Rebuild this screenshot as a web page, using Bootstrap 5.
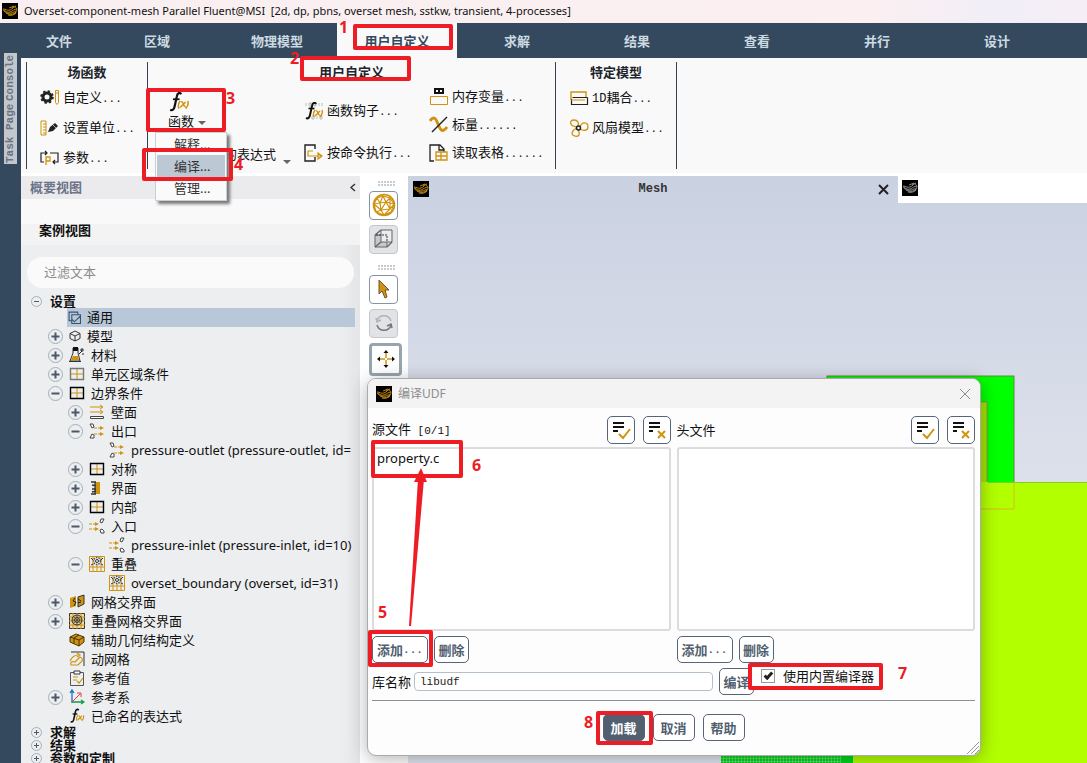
<!DOCTYPE html>
<html lang="zh-CN">
<head>
<meta charset="utf-8">
<meta name="viewport" content="width=device-width, initial-scale=1">
<title>Overset-component-mesh Parallel Fluent@MSI</title>
<link rel="stylesheet" href="https://cdn.jsdelivr.net/npm/bootstrap@5.3.0/dist/css/bootstrap.min.css">
<style>
:root{--navy:#34495e;--gold:#cf930f;--slate:#525f70;--note:#ee1c25}
body{font-family:"Noto Sans","Noto Sans CJK SC",sans-serif;font-size:13px;line-height:18px;color:#111;background:#fff;height:100vh;overflow:hidden}
button{font:inherit;color:inherit}
svg{display:block;flex:none}
.mono{font-family:"Liberation Mono","Noto Sans CJK SC",monospace;font-size:11px}
.plain{border:0;background:none;padding:0}
.title-strip{height:23px;padding-left:2px;gap:6px;font-size:11px;background:linear-gradient(90deg,#f9eff0 0,#fbeff1 80%,#f1eef7 92%,#f6eef6);white-space:nowrap}
.rail{width:21px;background:var(--navy);padding:30px 4px 0}
.rail button{display:block;writing-mode:vertical-rl;transform:rotate(180deg);background:#c2c7cc;color:#687386;font:bold 11px/13px "Liberation Mono",monospace;width:13px;text-align:center;white-space:nowrap}
.rail .tab-a{height:49px}.rail .tab-b{height:62px}
.menu-strip{height:35px;background:var(--navy)}
.menu-strip .nav-link{width:120px;height:35px;padding:2px 0 0;line-height:33px;text-align:center;color:#ccdae1;font-weight:700;border-radius:0}
.menu-strip .first-tab{width:76px}
.menu-strip .nav-link.active{background:#f9f9f9;color:var(--navy)}
.ribbon{height:118px;background:#f9f9f9;padding:4px 0 0 5px;border-bottom:3px solid #fff}
.group-box{height:107px;border-left:1px solid #34404e;position:relative}
.group-box h2{font-size:13px;line-height:20px;font-weight:700;text-align:center;margin:0;color:#20242c}
.tool{display:flex;align-items:center;gap:3px;white-space:nowrap;height:20px}
.g-one{width:121px}.g-two{width:408px}.g-three{width:122px;border-right:1px solid #34404e}
.stack-30{display:flex;flex-direction:column;gap:10px;padding:6px 0 0 13px}
.col-fn{width:156px;position:relative}
.col-hook{width:125px;padding-top:19px;gap:22px}
.col-mem{padding-top:5px;gap:8px}
.fn-btn{display:flex;flex-direction:column;align-items:flex-start;width:40px;margin:10px 0 0 20px;line-height:18px}
.expr-btn{margin:14px 13px 0 auto}
.caret{width:0;height:0;border:4px solid transparent;border-top:4px solid #666;border-bottom:0}
.drop{position:absolute;left:7px;top:50px;width:72px;height:69px;min-width:0;padding:0 1px;border:1px solid #c8cfd6;border-radius:0;background:#fafafa;box-shadow:3px 3px 3px #777;z-index:5;font-size:13px;display:block}
.drop .dropdown-item{padding:0 0 0 17px;height:22px;line-height:20px;color:#333}
.drop .dropdown-item.picked{background:#bcc8d3}
.outline{width:339px;background:linear-gradient(90deg,transparent 320px,rgba(0,0,0,.04)),#eceef0;overflow:hidden}
.panel-head{height:23px;background:#ebebed;color:#6b7488;font-weight:700;padding:0 4px 0 9px}
.panel-gap{height:25px;background:#f9f9f9}
.case-head{height:21px;background:#f3f3f3;padding-left:18px;font-weight:700;font-size:13px;line-height:12px;margin:0}
.filter{height:31px;border-radius:16px;border:0;background:#fafafa;margin:12px 6px 7px;width:auto;padding:0 17px;font-size:13px;align-self:stretch;box-shadow:none}
.filter::placeholder{color:#8b8b8b}
.tree{margin:0 5px 0 0;padding:0;list-style:none;overflow:hidden}
.tree li{height:19px;display:flex;align-items:center;white-space:nowrap;padding-left:27px;gap:6px}
.tree li.lv2{padding-left:47px}.tree li.lv3{padding-left:88px}.tree li.leaf{padding-left:48px}
.tree li.lv0{height:13px;line-height:13px;padding-left:10px;gap:8px;font-weight:700}
.tree li.chosen{margin-left:46px;padding-left:1px;background:#b9c8d9}
.knob{width:15px;height:15px;border:1px solid #a3b0ba;border-radius:50%;position:relative;background:none;padding:0;flex:none}
.knob::before,.knob.more::after{content:"";position:absolute;background:#4d5868;left:3px;right:3px;top:6px;height:1px;box-shadow:0 0 0 .5px #4d5868}
.knob.more::after{left:6px;right:auto;width:1px;top:3px;height:7px}
.lv0 .knob{width:11px;height:11px}
.lv0 .knob::before,.lv0 .knob.more::after{top:4px;left:2px;right:2px;box-shadow:none}
.lv0 .knob.more::after{left:4px;right:auto;top:2px;height:5px}
.tools{width:48px;background:#fff;padding:5px 0 0 9px}
.grip{width:17px;height:5px;margin:0 0 5px 9px;background:radial-gradient(circle at 1px 1px,#ccc 1px,transparent 1px) 0 0/3px 3px}
.grip.lower{margin-top:11px}
.pad-btn{width:29px;height:29px;border:1px solid #8495a3;border-radius:4px;background:#fff;display:flex;align-items:center;justify-content:center;padding:0;margin-bottom:5px}
.pad-btn.dim{background:#e2e3e7;border-color:#c4c8cc}
.pad-btn.on{width:33px;height:33px;border:3px solid #97a5b0}
.view{background:linear-gradient(#cad1e1,#dfe3ed 60%,#e2e6ef);position:relative;min-width:0;overflow:hidden}
.scene{position:absolute;inset:0;width:100%;height:100%}
.view-tabs{position:relative;height:27px}
.view-tab{width:490px;padding:0 8px 0 5px;font-weight:700;color:#333}
.mono.big{font-size:12px}
.dialog-win{position:absolute;left:367px;top:378px;width:614px;background:#fdfdfd;border:1px solid #aaa;border-radius:9px;box-shadow:0 3px 18px rgba(0,0,0,.3);z-index:10}
.dialog-head{height:29px;background:#f3f3f3;border-radius:8px 8px 0 0;padding:0 9px 0 8px;gap:6px;color:#8d8d8d;font-size:12px}
.dialog-body{padding:8px 5px 14px 4px}
.side{flex:1 1 0}
.pair{display:flex;gap:6px}
.box-btn{border:1px solid #56657a;border-radius:5px;background:#fff;color:var(--slate);height:27px;font-weight:700;padding:0;width:35px;white-space:nowrap;display:flex;align-items:center;justify-content:center;flex:none}
.box-btn.w55{width:56px}.box-btn.w42{width:42px}
.box-btn.sq{width:28px;height:28px}
.box-btn.solid{background:#525f6e;color:#fff}
.file-list{height:184px;margin:3px 0 5px;border:2px solid #dcdcdc;border-radius:3px;background:#fff;padding:0 3px}
.file-list div{line-height:18px;font-size:13px}
.lib-row{padding-top:5px}
.lib-input{height:19px;width:299px;margin:0 6px 4px 3px;border:1px solid #b3c0cc;border-radius:4px;padding:0 5px;background:#fff;color:#222;line-height:17px}
.builtin{height:22px;margin-top:-3px;background:#fdfdfd;z-index:1;margin-left:-5px;padding-left:12px}
.builtin input{appearance:none;width:14px;height:14px;border:1px solid #999;margin:0;background:#fff;display:grid;place-content:center}
.builtin input:checked::before{content:"";width:9px;height:5px;border:solid #222;border-width:0 0 3px 3px;transform:rotate(-48deg) translate(1px,-1px)}
.footer-row{border-top:1px solid #8e9296;padding-top:13px;margin-top:5px;gap:8px}
.note{position:absolute;border:4px solid var(--note);border-radius:2px;pointer-events:none;z-index:20}
.num{position:absolute;color:var(--note);font-weight:700;font-size:16px;line-height:16px;z-index:20;pointer-events:none}
</style>
</head>
<body class="d-flex flex-column position-relative">
<svg width="0" height="0" class="position-absolute" fill="none" aria-hidden="true">
<defs>
<symbol id="logo" viewBox="0 0 16 16"><path fill="#000" d="M0 0h16v16H0z"/><path d="M1 6c3 0 4 2 7 1s4-4 6-4M1 7c3 1 4 3 7 2s4-3 7-3M2 8c3 3 7 3 12 0M4 10c3 2 7 2 10-1M6 12c3 1 6 0 8-2M7 5l5-2M10 5c2-2 4-1 5 1 0 2-1 4-3 5" stroke="currentColor" stroke-width=".9" fill="none"/></symbol>
<symbol id="fx" viewBox="0 0 20 18"><path d="M12 2C11 0 8.500.5 8 4L6 13c-.6 3-2 4-4 3" stroke="#111" stroke-width="2" fill="none"/><path d="M4.500 6.500h6" stroke="#111" stroke-width="1.600"/><path d="M11 8c-2 3-2 5-1 7M18 8c1 3 0 5-2 7M12 9c2-1 2 5 4 4M16 9l-5 5" stroke="#cf930f" stroke-width="1.400" fill="none"/></symbol>
<symbol id="fxb" viewBox="0 0 20 18"><path d="M2 1v3M5 1h2v3H5zM10 1h2v3h-2zM15 1v3M18 1v3M5 14v3M8 14h2v3H8zM13 14v3M16 14h2v3h-2z" stroke="#bbb" fill="none"/><use href="#fx"/></symbol>
<symbol id="gear" viewBox="0 0 20 18"><circle cx="7" cy="8" r="4" fill="none" stroke="#222" stroke-width="3"/><circle cx="7" cy="8" r="5.800" fill="none" stroke="#222" stroke-width="2" stroke-dasharray="2.300 2.250"/><path d="M15.500 1.500h3v12l-1.500 2-1.500-2zM15.500 4h3" stroke="#cf930f" fill="none"/></symbol>
<symbol id="units" viewBox="0 0 20 18"><path d="M1 2h5v14H1zM3 5h3M3 8h3M3 11h3M3 14h3" stroke="#cf930f" fill="none"/><path d="M8 13l2-5 5-4 3 3-5 5z" fill="#222"/><path d="M13 6l3 3" stroke="#aaa"/></symbol>
<symbol id="param" viewBox="0 0 20 18"><path d="M5 4H1v9h3M2 4h5M5 2l2 2-2 2M10 4h8v9h-5M15 11l-2 2 2 2" stroke="#222" stroke-width="1.200" fill="none"/><path d="M6 16V8h4v4H6" stroke="#cf930f" stroke-width="1.300" fill="none"/></symbol>
<symbol id="exec" viewBox="0 0 20 18"><path d="M11 5V1H1v16h10v-4" stroke="#222" stroke-width="1.400" fill="none"/><path d="M9 7H4v5h13M14 9l4 3-4 3z" stroke="#cf930f" stroke-width="1.200" fill="none"/></symbol>
<symbol id="memo" viewBox="0 0 20 18"><path d="M5 0h10v6H5z" fill="#111"/><path d="M7 2h2v2H7zM11 2h2v2h-2z" fill="#fff"/><path d="M1.500 8.500h17v8h-17z" stroke="#cf930f" fill="none"/></symbol>
<symbol id="scalar" viewBox="0 0 20 18"><path d="M1 5C5-1 7 3 9 8s4 10 9 3" stroke="#cf930f" stroke-width="3" fill="none"/><path d="M3 16L18 1" stroke="#222" stroke-width="1.500"/></symbol>
<symbol id="sheet" viewBox="0 0 20 18"><path d="M5 17H1V1h10l4 4v3M10 1v5h5" stroke="#222" stroke-width="1.300" fill="none"/><path d="M7 8h11v8H7zM7 12h11M12 8v8" stroke="#cf930f" stroke-width="1.300" fill="none"/></symbol>
<symbol id="oned" viewBox="0 0 20 18"><path d="M2 11V3h15v5" stroke="#cf930f" stroke-width="1.400" fill="none"/><path d="M18.500 8.500h-15M2.500 10v5.500h16v-7" stroke="#222" stroke-width="1.200" fill="none"/><path d="M2 11h14" stroke="#cf930f"/></symbol>
<symbol id="fan" viewBox="0 0 20 18"><g fill="none" stroke="#cf930f" stroke-width="1.300"><path d="M8 8C0 7 0 1 5 1c4 0 5 3 4 6M11 8c2-6 8-5 8 0 0 4-5 4-8 2M9 11c3 5 0 7-3 6-5-1-3-6 2-8"/></g><circle cx="9.500" cy="9" r="2" fill="none" stroke="#222" stroke-width="1.500"/></symbol>
<symbol id="gen" viewBox="0 0 12 12"><path d="M9 3V1H1v8h2M3.500 3.500h8v8h-8zM4 8l2 2 5-5" stroke="#34536f" fill="none"/></symbol>
<symbol id="cube" viewBox="0 0 12 12"><path d="M6 1l5 2.500v5L6 11 1 8.500v-5zM1 3.500L6 6l5-2.500M6 6v5" stroke="#333" fill="none"/></symbol>
<symbol id="flask" viewBox="0 0 16 16"><path d="M4 1h5v5l2 8H1l3-8z" stroke="#333" fill="none"/><path d="M4 9h5l1 4H2z" fill="#cf930f"/><path d="M4 0h5v4H4z" fill="#111"/><path d="M10 7l3-3M13 1v4M11 3h4M14 6v2" stroke="#222"/><path d="M0 14.500h12" stroke="#333"/></symbol>
<symbol id="grid" viewBox="0 0 16 16"><path d="M8 2v12M2 8h12" stroke="#cf930f"/><path d="M1.500 2.500h13v11h-13z" stroke="currentColor" stroke-width="1.400" fill="none"/></symbol>
<symbol id="wall" viewBox="0 0 16 16"><path d="M1 3h12M1 8h12M11 1l3 2-3 2M11 6l3 2-3 2" stroke="#cf930f" fill="none"/><path d="M1.500 12.500h13v2h-13z" stroke="#444" fill="#fff"/></symbol>
<symbol id="outl" viewBox="0 0 16 16"><path d="M5 5h7M5 11h7" stroke="#cf930f" stroke-dasharray="3 1"/><path d="M11 3l4 2-4 2zM11 9l4 2-4 2z" fill="#cf930f"/><path d="M1 1h3l1 3-2 1zM1 15h4v-3l-2-1z" stroke="#444" fill="#fff"/></symbol>
<symbol id="inl" viewBox="0 0 16 16"><path d="M0 6h7M0 11h7" stroke="#cf930f" stroke-dasharray="3 1"/><path d="M6 4l4 2-4 2zM6 9l4 2-4 2z" fill="#cf930f"/><path d="M11 4l1-3h3l-2 4zM11 12l1 3h3v-2l-2-2z" stroke="#444" fill="#fff"/></symbol>
<symbol id="iface" viewBox="0 0 16 16"><path d="M6 2h5v12H6z" fill="#cf930f"/><path d="M2 2h5M2 14h5M3 5l4 1M3 9h4M6 2v12M3 12l4-1" stroke="#333" stroke-width="1.300"/></symbol>
<symbol id="over" viewBox="0 0 16 16"><path d="M.500.500h15v15H.500zM1 11h14M4 1v14M12 1v14M8 9v6" stroke="#cf930f" fill="none"/><circle cx="8" cy="5" r="3.500" fill="#eee" stroke="#555" stroke-width="1.500" stroke-dasharray="1.500 1"/><circle cx="8" cy="5" r="1.500" fill="none" stroke="#333"/><path d="M2 2l2 2M14 2l-2 2M2 9l2-1M14 9l-2-1" stroke="#333"/></symbol>
<symbol id="mint" viewBox="0 0 16 16"><path d="M1 4l6-2v10l-6 2z" fill="#cf930f"/><path d="M9 3l6-2v9l-6 3z" fill="#cf930f" stroke="#333"/><path d="M6 4l-2 3 3 1-2 4M9 5l3 2M9 9l3-1" stroke="#222" fill="none"/></symbol>
<symbol id="omesh" viewBox="0 0 16 16"><path d="M.500.500h15v15H.500z" stroke="#333" fill="#ecd9b0"/><path d="M4 0v16M8 0v16M12 0v16M0 4h16M0 8h16M0 12h16" stroke="#cf930f"/><circle cx="8" cy="7" r="5" stroke="#333" fill="none"/><circle cx="8" cy="7" r="2.500" stroke="#333" fill="none"/><path d="M8 2v10M3 7h10M4 3l8 8M12 3l-8 8" stroke="#444" stroke-width=".7"/></symbol>
<symbol id="geom" viewBox="0 0 16 16"><path d="M1 5l6-3 8 3v5l-5 4-9-4z" fill="#cf930f" stroke="#493408"/><path d="M1 5l9 3 5-3M10 8v6M5 6.500v5M5 6l5-3" stroke="#493408" fill="none"/></symbol>
<symbol id="dyn" viewBox="0 0 16 16"><path d="M2 1h13v14" stroke="#333" fill="none"/><path d="M1 10c2-4 4-6 8-6M8 2l3 2-3 2M2 14c-1-3 1-4 4-3l5-5c3 1 3 4 1 5l-3 3z" stroke="#cf930f" stroke-width="1.200" fill="none"/></symbol>
<symbol id="clip" viewBox="0 0 16 16"><path d="M1.500 2.500h13v13h-13z" stroke="#555" fill="none"/><path d="M5 1h6v3H5z" fill="#fff" stroke="#333"/><path d="M4 7h5M4 10h4M8 11l2 2 4-5" stroke="#cf930f" stroke-width="1.200" fill="none"/></symbol>
<symbol id="axes" viewBox="0 0 16 16"><path d="M3 14V2M1 4l2-3 2 3" stroke="#1474c4" stroke-width="1.300" fill="none"/><path d="M3 13h11M12 11l3 2-3 2" stroke="#159a4a" stroke-width="1.300" fill="none"/><path d="M3 13l8-8M8 4h4v4" stroke="#e23b3b" fill="none"/></symbol>
<symbol id="okall" viewBox="0 0 20 20"><path d="M2 3h11M2 7h11M2 11h5" stroke="#111" stroke-width="2"/><path d="M8 14l4 4 7-9" stroke="#cf930f" stroke-width="2" fill="none"/></symbol>
<symbol id="noall" viewBox="0 0 20 20"><path d="M2 3h11M2 7h11M2 11h4" stroke="#111" stroke-width="2"/><path d="M11 11l7 7M18 11l-7 7" stroke="#cf930f" stroke-width="2"/></symbol>
</defs>
</svg>

<header class="title-strip d-flex align-items-center"><svg width="16" height="16" color="#cf930f"><use href="#logo"/></svg><span>Overset-component-mesh Parallel Fluent@MSI&nbsp; [2d, dp, pbns, overset mesh, sstkw, transient, 4-processes]</span></header>

<div class="d-flex flex-grow-1 overflow-hidden">
<aside class="rail"><button class="plain tab-a" type="button">Console</button><button class="plain tab-b" type="button">Task Page</button></aside>
<div class="d-flex flex-column flex-grow-1 overflow-hidden">
<nav class="menu-strip nav flex-nowrap">
<a class="nav-link first-tab" href="#">文件</a><a class="nav-link" href="#">区域</a><a class="nav-link" href="#">物理模型</a><a class="nav-link active" href="#">用户自定义</a><a class="nav-link" href="#">求解</a><a class="nav-link" href="#">结果</a><a class="nav-link" href="#">查看</a><a class="nav-link" href="#">并行</a><a class="nav-link" href="#">设计</a>
</nav>
<section class="ribbon d-flex">
<div class="group-box g-one"><h2>场函数</h2><div class="stack-30">
<button class="plain tool" type="button"><svg width="20" height="18"><use href="#gear"/></svg><span>自定义<span class="mono">...</span></span></button>
<button class="plain tool" type="button"><svg width="20" height="18"><use href="#units"/></svg><span>设置单位<span class="mono">...</span></span></button>
<button class="plain tool" type="button"><svg width="20" height="18"><use href="#param"/></svg><span>参数<span class="mono">...</span></span></button>
</div></div>
<div class="group-box g-two"><h2>用户自定义</h2><div class="d-flex">
<div class="col-fn">
<button class="plain fn-btn" type="button" aria-expanded="true"><svg width="22" height="20"><use href="#fx"/></svg><span class="d-flex align-items-center gap-1">函数 <i class="caret mt-1"></i></span></button>
<div class="dropdown-menu drop"><button class="dropdown-item" type="button">解释...</button><button class="dropdown-item picked" type="button">编译...</button><button class="dropdown-item" type="button">管理...</button></div>
<button class="plain tool expr-btn" type="button"><span>的表达式</span><i class="caret ms-1 mt-3"></i></button>
</div>
<div class="col-hook d-flex flex-column"><button class="plain tool" type="button"><svg width="20" height="18"><use href="#fxb"/></svg><span>函数钩子<span class="mono">...</span></span></button><button class="plain tool" type="button"><svg width="20" height="18"><use href="#exec"/></svg><span>按命令执行<span class="mono">...</span></span></button></div>
<div class="col-mem d-flex flex-column"><button class="plain tool" type="button"><svg width="20" height="18"><use href="#memo"/></svg><span>内存变量<span class="mono">...</span></span></button><button class="plain tool" type="button"><svg width="20" height="18"><use href="#scalar"/></svg><span>标量<span class="mono">......</span></span></button><button class="plain tool" type="button"><svg width="20" height="18"><use href="#sheet"/></svg><span>读取表格<span class="mono">......</span></span></button></div>
</div></div>
<div class="group-box g-three"><h2>特定模型</h2><div class="stack-30">
<button class="plain tool" type="button"><svg width="20" height="18"><use href="#oned"/></svg><span><span class="mono big">1D</span>耦合<span class="mono">...</span></span></button>
<button class="plain tool" type="button"><svg width="20" height="18"><use href="#fan"/></svg><span>风扇模型<span class="mono">...</span></span></button>
</div></div>
</section>

<main class="d-flex flex-grow-1 overflow-hidden">
<section class="outline d-flex flex-column flex-shrink-0">
<div class="panel-head d-flex align-items-center justify-content-between flex-shrink-0"><span>概要视图</span><button class="plain" type="button" aria-label="收起"><svg width="7" height="9"><path d="M6 1L2 4.500 6 8" stroke="#333" stroke-width="1.400" fill="none"/></svg></button></div>
<div class="panel-gap flex-shrink-0"></div>
<h2 class="case-head flex-shrink-0">案例视图</h2>
<input class="filter form-control flex-shrink-0" type="text" placeholder="过滤文本" aria-label="过滤文本">
<ul class="tree flex-shrink-0">
<li class="lv0"><button class="knob" aria-label="折叠"></button>设置</li>
<li class="chosen"><svg width="13" height="13"><use href="#gen"/></svg>通用</li>
<li><button class="knob more" aria-label="展开"></button><svg width="12" height="12"><use href="#cube"/></svg>模型</li>
<li><button class="knob more" aria-label="展开"></button><svg width="16" height="16"><use href="#flask"/></svg>材料</li>
<li><button class="knob more" aria-label="展开"></button><svg width="16" height="16" color="#777"><use href="#grid"/></svg>单元区域条件</li>
<li><button class="knob" aria-label="折叠"></button><svg width="16" height="16" color="#000"><use href="#grid"/></svg>边界条件</li>
<li class="lv2"><button class="knob more" aria-label="展开"></button><svg width="16" height="16"><use href="#wall"/></svg>壁面</li>
<li class="lv2"><button class="knob" aria-label="折叠"></button><svg width="16" height="16"><use href="#outl"/></svg>出口</li>
<li class="lv3"><svg width="16" height="16"><use href="#outl"/></svg>pressure-outlet (pressure-outlet, id=</li>
<li class="lv2"><button class="knob more" aria-label="展开"></button><svg width="16" height="16" color="#000"><use href="#grid"/></svg>对称</li>
<li class="lv2"><button class="knob more" aria-label="展开"></button><svg width="16" height="16"><use href="#iface"/></svg>界面</li>
<li class="lv2"><button class="knob more" aria-label="展开"></button><svg width="16" height="16" color="#000"><use href="#grid"/></svg>内部</li>
<li class="lv2"><button class="knob" aria-label="折叠"></button><svg width="16" height="16"><use href="#inl"/></svg>入口</li>
<li class="lv3"><svg width="16" height="16"><use href="#inl"/></svg>pressure-inlet (pressure-inlet, id=10)</li>
<li class="lv2"><button class="knob" aria-label="折叠"></button><svg width="16" height="16"><use href="#over"/></svg>重叠</li>
<li class="lv3"><svg width="16" height="16"><use href="#over"/></svg>overset_boundary (overset, id=31)</li>
<li><button class="knob more" aria-label="展开"></button><svg width="16" height="16"><use href="#mint"/></svg>网格交界面</li>
<li><button class="knob more" aria-label="展开"></button><svg width="16" height="16"><use href="#omesh"/></svg>重叠网格交界面</li>
<li class="leaf"><svg width="16" height="16"><use href="#geom"/></svg>辅助几何结构定义</li>
<li class="leaf"><svg width="16" height="16"><use href="#dyn"/></svg>动网格</li>
<li class="leaf"><svg width="16" height="16"><use href="#clip"/></svg>参考值</li>
<li><button class="knob more" aria-label="展开"></button><svg width="16" height="16"><use href="#axes"/></svg>参考系</li>
<li class="leaf"><svg width="16" height="16"><use href="#fx"/></svg>已命名的表达式</li>
<li class="lv0"><button class="knob more" aria-label="展开"></button>求解</li>
<li class="lv0"><button class="knob more" aria-label="展开"></button>结果</li>
<li class="lv0"><button class="knob more" aria-label="展开"></button>参数和定制</li>
</ul>
</section>
<div class="tools flex-shrink-0">
<div class="grip"></div>
<button class="pad-btn" type="button" aria-label="网格"><svg width="24" height="24" viewBox="0 0 24 24" fill="none" stroke="#cf930f" stroke-width="1.200"><circle cx="12" cy="12" r="10.500" stroke-width="1.600"/><path d="M5 5l6-2 7 2 4 6-3 8-7 3-8-3-2-8zM5 5l3 5 3-7 3 6 4-4M2 11l6-1 6-1 8 2M8 10l1 7 5-8 4 7 4-5M4 19l5-2 9-1M9 17l3 5 6-6M2 11l7 6M18 5l0 11"/></svg></button>
<button class="pad-btn dim" type="button" aria-label="视图"><svg width="20" height="20" viewBox="0 0 20 20" fill="none" stroke="#666"><path d="M1 6v12h12V6z" fill="#c8c8ca"/><path d="M7 1h11v12H7z" fill="#ececef"/><path d="M1 6l6-5M13 18l5-5M1 18l6-5" stroke-width="1.400"/><path d="M2 6h11v7" stroke="#333" stroke-dasharray="2 1"/></svg></button>
<div class="grip lower"></div>
<button class="pad-btn" type="button" aria-label="选择"><svg width="14" height="20" viewBox="0 0 14 20"><path d="M2 1v14l3-3 3 7 2-1-2-7h4z" fill="#cf930f" stroke="#6d5630"/></svg></button>
<button class="pad-btn dim" type="button" aria-label="旋转"><svg width="18" height="18" viewBox="0 0 18 18" fill="none" stroke-width="1.500"><path d="M2 7c2-7 12-7 14 0M1 4l1 4 4-2" stroke="#b4b4b4"/><path d="M2 11c2 7 12 7 14 0M17 14l-1-4-4 2" stroke="#777"/></svg></button>
<button class="pad-btn on" type="button" aria-label="平移"><svg width="18" height="18" viewBox="0 0 18 18"><path d="M9 3v12M3 9h12" stroke="#cf930f" stroke-width="1.500"/><path d="M6.500 3L9 0l2.500 3zM6.500 15L9 18l2.500-3zM3 6.500L0 9l3 2.500zM15 6.500L18 9l-3 2.500z" fill="#111"/><path d="M8 8h2v2H8z" fill="#fff"/></svg></button>
</div>
<section class="view flex-grow-1">
<svg class="scene" aria-hidden="true">
<defs><pattern id="cells" width="3" height="3" patternUnits="userSpaceOnUse"><path d="M0 0h3M0 0v3" stroke="#8fe48f"/></pattern></defs>
<rect x="419" y="200" width="187" height="133" fill="#0f0" stroke="#5a8a3c"/>
<rect x="445" y="306" width="100%" height="100%" fill="#b2ff00"/>
<path d="M572 306V226h7v80" fill="#a5e400" stroke="#7a9a3c"/>
<path d="M580 306.500h600" stroke="#7fd02a"/><path d="M606 306v27h-34" stroke="#d8b820" fill="none"/>
<rect x="313" y="440" width="132" height="100%" fill="#00d61c"/><rect x="313" y="440" width="120" height="100%" fill="url(#cells)"/>
</svg>
<div class="view-tabs d-flex">
<div class="view-tab d-flex align-items-center justify-content-between flex-shrink-0"><svg width="16" height="16" color="#cf930f"><use href="#logo"/></svg><span class="mono big">Mesh</span><button class="plain" type="button" aria-label="关闭"><svg width="13" height="13"><path d="M2 2l9 9M11 2l-9 9" stroke="#222" stroke-width="2"/></svg></button></div>
<div class="flex-grow-1 bg-white p-1"><svg width="16" height="16" color="#999"><use href="#logo"/></svg></div>
</div>
</section>
</main>
</div>
</div>

<!-- Tutorial steps over the ribbon -->
<div class="note" style="left:353px;top:24px;width:100px;height:26px"></div><span class="num" style="left:339px;top:19px">1</span>
<div class="note" style="left:300px;top:56px;width:111px;height:25px"></div><span class="num" style="left:290px;top:50px">2</span>
<div class="note" style="left:146px;top:88px;width:80px;height:44px"></div><span class="num" style="left:226px;top:90px">3</span>
<div class="note" style="left:142px;top:148px;width:91px;height:33px"></div><span class="num" style="left:234px;top:156px">4</span>

<section class="dialog-win" role="dialog" aria-label="编译UDF">
<div class="dialog-head d-flex align-items-center"><svg width="16" height="16" color="#cf930f"><use href="#logo"/></svg><span>编译UDF</span><button class="plain ms-auto" type="button" aria-label="关闭"><svg width="12" height="12"><path d="M1 1l10 10M11 1L1 11" stroke="#8d8d8d"/></svg></button></div>
<div class="dialog-body">
<div class="pair">
<div class="side">
<div class="d-flex align-items-center gap-2"><span class="me-auto">源文件<span class="mono"> [0/1]</span></span><button class="box-btn sq" type="button" aria-label="全选"><svg width="20" height="20"><use href="#okall"/></svg></button><button class="box-btn sq" type="button" aria-label="全不选"><svg width="20" height="20"><use href="#noall"/></svg></button></div>
<div class="file-list"><div>property.c</div></div>
<div class="pair"><button class="box-btn w55" type="button">添加<span class="mono">...</span></button><button class="box-btn" type="button">删除</button></div>
</div>
<div class="side">
<div class="d-flex align-items-center gap-2"><span class="me-auto">头文件</span><button class="box-btn sq" type="button" aria-label="全选"><svg width="20" height="20"><use href="#okall"/></svg></button><button class="box-btn sq" type="button" aria-label="全不选"><svg width="20" height="20"><use href="#noall"/></svg></button></div>
<div class="file-list"></div>
<div class="pair"><button class="box-btn w55" type="button">添加<span class="mono">...</span></button><button class="box-btn" type="button">删除</button></div>
</div>
</div>
<div class="lib-row d-flex align-items-end">
<label for="lib" class="align-self-center">库名称</label><input id="lib" class="lib-input mono" value="libudf"><button class="box-btn" type="button">编译</button>
<label class="builtin d-flex align-items-center gap-2 align-self-start"><input type="checkbox" checked>使用内置编译器</label>
</div>
<div class="footer-row d-flex justify-content-center"><button class="box-btn solid w42" type="button">加载</button><button class="box-btn w42" type="button">取消</button><button class="box-btn w42" type="button">帮助</button></div>
</div>
<svg class="position-absolute bottom-0 end-0" width="14" height="14" stroke="#999"><path d="M1 13L13 1M5 13l8-8M9 13l4-4"/></svg>
<svg class="position-absolute top-0 start-0" width="100" height="260" style="pointer-events:none"><path d="M41 247L50 100h6L43 247z" fill="#ee1c25"/><path d="M53 89l-7 14h13z" fill="#ee1c25"/></svg>
<div class="note" style="left:3px;top:61px;width:92px;height:38px"></div><span class="num" style="left:104px;top:78px">6</span>
<div class="note" style="left:0;top:251px;width:65px;height:37px"></div><span class="num" style="left:10px;top:225px">5</span>
<div class="note" style="left:380px;top:284px;width:135px;height:27px"></div><span class="num" style="left:530px;top:286px">7</span>
<div class="note" style="left:228px;top:332px;width:57px;height:34px"></div><span class="num" style="left:216px;top:335px">8</span>
</section>
<script src="https://cdn.jsdelivr.net/npm/bootstrap@5.3.0/dist/js/bootstrap.bundle.min.js"></script>
</body>
</html>
